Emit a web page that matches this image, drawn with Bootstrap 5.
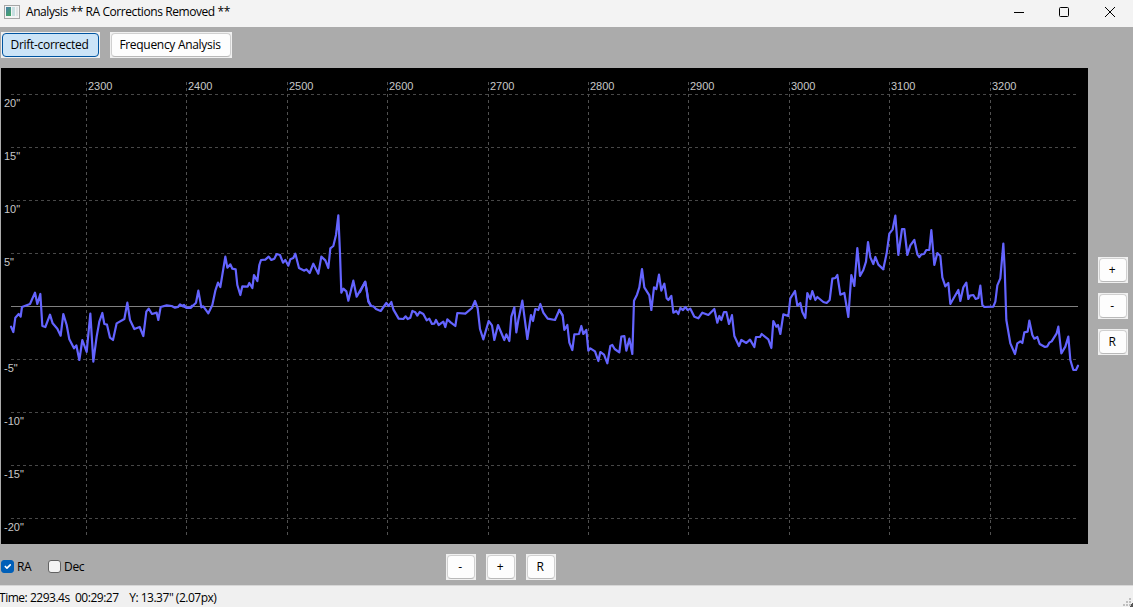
<!DOCTYPE html>
<html lang="en">
<head>
<meta charset="utf-8">
<title>Analysis</title>
<link href="https://cdn.jsdelivr.net/npm/bootstrap@5.3.0/dist/css/bootstrap.min.css" rel="stylesheet">
<style>
body{font:12px/16px "Open Sans","Noto Sans",sans-serif;color:#000;background:#ababab;width:1133px;height:607px;letter-spacing:-.3px}
.titlebar{height:27px;background:#f3f3f3;padding:0 16px 3px 4px}
.titlebar .caption{letter-spacing:-.42px;margin-left:6px}
.tools{height:41px;padding:5px 0 0 1px;gap:10px}
.wbtn,.wbtn.btn:hover,.wbtn.btn.active{position:relative;isolation:isolate;height:26px;border:0;border-radius:0;background:#f0f0f0;color:#000;font-size:12px;line-height:16px;padding:0 2px 0 0;letter-spacing:inherit}
.wbtn::before{content:"";position:absolute;inset:1px;z-index:-1;border:1px solid #d0d0d0;border-bottom-color:#b9b9b9;border-radius:4px;background:#fdfdfd}
.wbtn.active::before{background:#cce4f7;border-color:#0054a0}
.w-drift{width:99px}.w-freq{width:122px}
.wsq{width:30px;flex:none}
.graph{width:1087px;height:476px;background:#000;margin-left:1px}
.graph svg text{font:11px "Liberation Sans",Arial,sans-serif;fill:#c8c8c8;letter-spacing:0}
.side{padding:189px 0 0 10px;gap:10px}
.bottom{height:41px}
.checks{width:446px;padding-top:4px}
.checks .form-check-input{width:13px;height:13px;margin:0 3px 0 1px;border:1px solid #626262;border-radius:3px;background-color:#f3f3f3;float:none}
.checks .form-check-input:checked{background-color:#005fb8;border-color:#005fb8;background-size:11px}
.first-check{width:47px}
.xbtns{gap:10px;padding-top:10px}
.status{height:22px;background:#f0f0f0;border-top:1px solid #d7d7d7;white-space:pre;padding-top:4px;letter-spacing:-.48px;text-indent:-1px}
</style>
</head>
<body class="d-flex flex-column overflow-hidden m-0">
<header class="titlebar d-flex align-items-center">
  <svg width="16" height="14" viewBox="0 0 16 14" shape-rendering="crispEdges"><path fill="#a6a6a6" d="M0 0h16v14H0z"/><path fill="#f4f4f4" d="M1 1h14v12H1z"/><defs><linearGradient id="ic" x2=".6" y2="1"><stop stop-color="#4b7fa8"/><stop offset="1" stop-color="#43a36b"/></linearGradient></defs><path fill="url(#ic)" d="M2 2h5v9H2z"/><path fill="#c8dfe1" d="M8 2h3v9H8z"/><path fill="#e0e5e5" d="M12 2h2v9h-2z"/></svg>
  <span class="caption">Analysis ** RA Corrections Removed **</span>
  <svg class="ms-auto" width="104" height="14" viewBox="0 0 104 14" fill="none" stroke="#000"><path d="M1 7.5h10"/><rect x="46.5" y="2.5" width="9" height="9" rx="1"/><path d="M92 2l10 10M102 2L92 12"/></svg>
</header>
<nav class="tools d-flex align-items-start">
  <button class="btn wbtn active w-drift">Drift-corrected</button>
  <button class="btn wbtn w-freq">Frequency Analysis</button>
</nav>
<main class="d-flex">
  <div class="graph">
  <svg class="d-block" width="1087" height="476" viewBox="1 68 1087 476">
    <g stroke="#505050" stroke-dasharray="3 3" shape-rendering="crispEdges">
      <path d="M11 94.5H1078M11 147.5H1078M11 200.5H1078M11 253.5H1078M11 359.5H1078M11 412.5H1078M11 465.5H1078M11 518.5H1078" stroke="#484848"/>
      <path d="M86.5 82V535M186.5 82V535M287.5 82V535M387.5 82V535M488.5 82V535M588.5 82V535M688.5 82V535M789.5 82V535M889.5 82V535M990.5 82V535"/>
    </g>
    <path d="M11 306.5H1078" stroke="#808080" shape-rendering="crispEdges"/>
    <g><text x="88" y="90">2300</text><text x="188" y="90">2400</text><text x="289" y="90">2500</text><text x="389" y="90">2600</text><text x="490" y="90">2700</text><text x="590" y="90">2800</text><text x="690" y="90">2900</text><text x="791" y="90">3000</text><text x="891" y="90">3100</text><text x="992" y="90">3200</text>
    <text x="4" y="107">20"</text><text x="4" y="160">15"</text><text x="4" y="213">10"</text><text x="4" y="266">5"</text><text x="4" y="372">-5"</text><text x="4" y="425">-10"</text><text x="4" y="478">-15"</text><text x="4" y="531">-20"</text></g>
    <g fill="none" stroke="#6464ff" stroke-width="6.6" stroke-linejoin="round" stroke-linecap="round">
      <polyline transform="translate(0 270) scale(.33333)" points="33,170 40,186 46,143 56,132 62,140 66,111 90,102 105,68 112,102 121,72 127,168 136,171 150,134 158,160 172,176 182,197 190,132 200,165 208,208 222,235 229,226 238,270 247,210 260,246 271,131 280,275 290,200 298,155 307,129 313,162 321,164 330,203 339,210 350,160 373,147 382,98 390,150 403,177 419,171 430,198 439,125 446,116 456,132 470,128 475,150 482,111 500,106 515,108 525,113 534,111 540,103 547,108 560,113 570,113 576,107"/>
      <polyline transform="translate(180 200) scale(.33333)" points="7,318 12,315 20,324 32,324 48,308 55,272 64,322 70,319 85,340 97,315 106,272 114,248 121,261 136,170 142,203 151,193 157,206 167,208 172,255 181,285 187,259 203,260 208,249 217,264 222,225 232,243 238,195 243,180 256,179 266,170 274,180 283,176 290,162 300,165 309,188 316,180 325,197 331,178 340,174 346,161 357,204 373,212 379,208 389,219 400,191 415,221 424,170 436,181 445,204 451,145 460,138 468,105 475,46 480,160 484,278 490,266 499,274 505,302 520,242 530,290 556,245 565,302 572,316"/>
      <polyline transform="translate(360 280) scale(.33333)" points="0,36 15,6 20,30 25,65 33,78 40,79 48,87 62,93 79,69 86,78 94,66 100,88 116,116 130,117 137,109 143,117 151,113 157,93 166,97 172,107 179,96 190,102 200,121 208,116 216,132 223,131 228,120 236,135 250,125 256,141 262,118 272,127 286,138 292,99 316,101 336,84 345,63 353,85 360,147 370,178 386,123 396,136 403,180 414,135 433,180 439,163 448,183 454,110 463,82 469,157 475,120 487,62 502,177 513,105 519,123 526,87 535,90 541,72 550,98 563,116 585,120 598,90 607,105"/>
      <polyline transform="translate(560 250) scale(.33333)" points="-2,180 8,196 13,240 22,225 28,278 37,300 43,253 57,252 64,228 70,252 79,240 85,302 91,295 105,304 115,333 121,306 132,314 142,340 151,288 157,285 164,297 178,307 184,260 193,258 199,302 208,266 217,312 222,152 231,134 238,112 246,57 253,112 268,136 274,180 282,112 289,117 297,74 304,122 313,101 320,145 325,150 334,138 340,188 349,183 355,192 361,174 369,180 376,171 383,180 391,176 403,200 415,205 427,188 445,195 463,177 472,218 478,198 484,210 492,186 499,186 507,222 516,196"/>
      <polyline transform="translate(720 220) scale(.33333)" points="36,286 43,348 57,378 64,360 79,369 90,359 103,381 108,351 120,351 125,342 145,358 154,384 160,303 169,320 174,315 181,342 190,283 205,288 211,235 225,213 232,257 241,249 247,276 256,294 262,219 271,237 277,213 286,240 292,231 310,246 320,249 329,240 337,176 346,174 352,165 361,224 373,219 385,291 394,165 403,198 412,84 420,168 430,150 438,125 444,66 451,112 460,132 466,111 475,134 490,148"/>
      <polyline transform="translate(880 200) scale(.33333)" points="10,206 20,160 28,101 38,88 46,47 55,165 66,87 73,87 82,165 91,136 103,120 112,163 118,171 124,163 132,162 139,150 148,150 154,90 163,195 172,159 181,168 187,232 196,259 205,249 211,312 235,270 241,303 250,262 259,248 265,297 270,287 280,285 287,297 295,294 301,257 307,315 313,321 340,320 346,305 352,256 361,235 370,131 374,205 379,360 391,430 405,462 412,430 421,424 427,429 433,397 443,395 448,362 457,405 463,416 472,411 479,432 495,441 502,439 508,428 515,424 530,400 535,380 544,460 556,440 565,410 571,480 580,510 588,510 594,497"/>
    </g>
  </svg>
  </div>
  <aside class="side d-flex flex-column">
    <button class="btn wbtn wsq">+</button><button class="btn wbtn wsq">-</button><button class="btn wbtn wsq">R</button>
  </aside>
</main>
<section class="bottom d-flex">
  <div class="checks d-flex align-items-center">
    <label class="first-check d-flex align-items-center"><input type="checkbox" class="form-check-input" checked>RA</label>
    <label class="d-flex align-items-center"><input type="checkbox" class="form-check-input">Dec</label>
  </div>
  <div class="xbtns d-flex">
    <button class="btn wbtn wsq">-</button><button class="btn wbtn wsq">+</button><button class="btn wbtn wsq">R</button>
  </div>
</section>
<footer class="status position-relative">Time: 2293.4s  00:29:27    Y: 13.37" (2.07px)<svg class="position-absolute end-0 bottom-0" width="11" height="11" fill="#bfbfbf" shape-rendering="crispEdges"><path d="M7 2h2v2H7zM4 5h2v2H4zM7 5h2v2H7zM1 8h2v2H1zM4 8h2v2H4zM7 8h2v2H7z"/><path d="M11 6v5H8z" fill="#555"/></svg></footer>
<script src="https://cdn.jsdelivr.net/npm/bootstrap@5.3.0/dist/js/bootstrap.bundle.min.js"></script>
</body>
</html>
